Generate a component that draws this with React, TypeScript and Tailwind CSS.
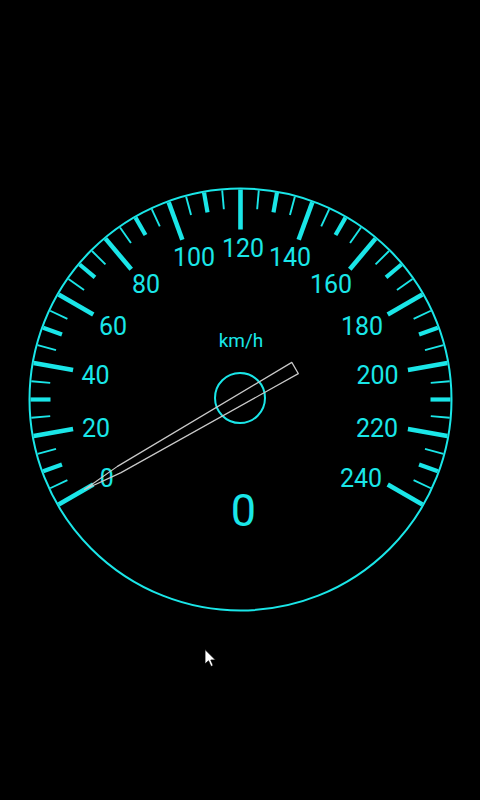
import React from "react";

const CX = 240.5;
const CY = 399.5;
const CYAN = "#1ae6e8";

function pt(value: number, r: number) {
  const a = ((210 - value) * Math.PI) / 180;
  return { x: CX + r * Math.cos(a), y: CY - r * Math.sin(a) };
}

// measured label spots: [value, x, baseline]
const labels: [number, number, number][] = [
  [0, 106.7, 487],
  [20, 96, 437],
  [40, 95.5, 384],
  [60, 113, 335],
  [80, 146, 293],
  [100, 194, 266],
  [120, 243, 256.5],
  [140, 290, 266],
  [160, 331, 293],
  [180, 362, 335],
  [200, 377.5, 384],
  [220, 377, 437],
  [240, 361, 487],
];

function Ticks() {
  const items = [];
  for (let v = 0; v <= 240; v += 5) {
    const major = v % 20 === 0;
    const mid = !major && v % 10 === 0;
    const r1 = major ? 170 : mid ? 190 : 191;
    const a = pt(v, r1);
    const b = pt(v, 210);
    items.push(
      <line
        key={v}
        x1={a.x}
        y1={a.y}
        x2={b.x}
        y2={b.y}
        stroke={CYAN}
        strokeWidth={major ? 4.6 : mid ? 4.2 : 1.9}
      />
    );
  }
  return <g>{items}</g>;
}

function Needle({ value }: { value: number }) {
  const a = ((210 - value) * Math.PI) / 180;
  const dx = Math.cos(a);
  const dy = -Math.sin(a);
  const px = -dy;
  const py = dx;
  const p = (r: number, w: number) => `${CX + dx * r + px * w},${CY + dy * r + py * w}`;
  const points = [p(-63, 6.5), p(140, 3.6), p(180, 0), p(140, -3.6), p(-63, -6.5)].join(" ");
  return <polygon points={points} fill="none" stroke="#c9c9c9" strokeWidth={1.2} strokeLinejoin="round" />;
}

export default function App() {
  return (
    <div className="w-[480px] h-[800px] bg-black overflow-hidden">
      <svg width="480" height="800" viewBox="0 0 480 800" className="block">
        <circle cx={CX} cy={CY} r={211} fill="none" stroke={CYAN} strokeWidth={2} />
        <Ticks />
        <g fill={CYAN} fontFamily="Roboto, 'Noto Sans', sans-serif" fontSize={25} textAnchor="middle">
          {labels.map(([v, x, y]) => (
            <text key={v} x={x} y={y}>
              {v}
            </text>
          ))}
        </g>
        <text
          x={241}
          y={346.5}
          fill={CYAN}
          fontFamily="Roboto, 'Noto Sans', sans-serif"
          fontSize={19}
          textAnchor="middle"
        >
          km/h
        </text>
        <circle cx={240} cy={398} r={25} fill="none" stroke={CYAN} strokeWidth={2} />
        <Needle value={0} />
        <text
          x={243.5}
          y={526}
          fill={CYAN}
          fontFamily="Roboto, 'Noto Sans', sans-serif"
          fontSize={45}
          textAnchor="middle"
        >
          0
        </text>
        {/* mouse pointer */}
        <path
          d="M205 649.5 L205 664 L208.5 660.8 L211 666.5 L213.2 665.5 L210.8 660 L215.5 660 Z"
          fill="#ffffff"
          stroke="#000000"
          strokeWidth={0.8}
        />
      </svg>
    </div>
  );
}
